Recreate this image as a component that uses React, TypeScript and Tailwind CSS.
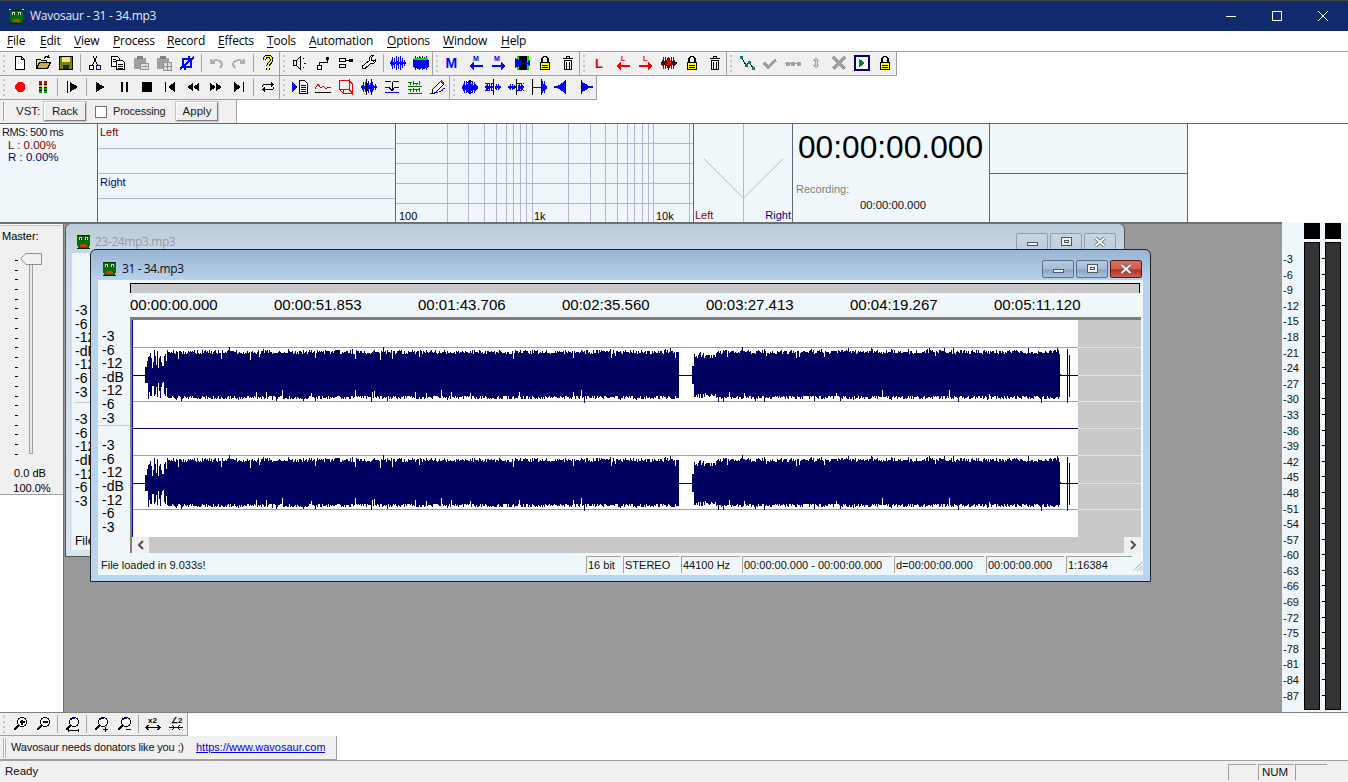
import type { ReactNode } from 'react';

const NAVY = '#000060';
const BLUE = '#0000ff';

function rng(seed: number) {
  let s = seed;
  return () => {
    s = (s * 16807) % 2147483647;
    return s / 2147483647;
  };
}

// one vertical stroke per pixel column, the way the editor paints a zoomed out wave
function wavePath(cy: number, seed: number) {
  const r = rng(seed);
  let d = '';
  for (let x = 145; x < 1060; x++) {
    if (x >= 679 && x < 692) continue;
    let up = 21 + r() * 4;
    let down = 20.5 + r() * 4;
    if (r() < 0.05) up += 1.5 + r() * 2;
    if (r() < 0.05) down += 1.5 + r() * 2;
    if (r() < 0.025) up -= 6;
    if (r() < 0.025) down -= 6;
    if (x < 147) {
      up = 8;
      down = 8;
    } else if (x < 167) {
      const gap = r() < 0.25 ? 10 : 0;
      up = 16 + r() * 9 - gap;
      down = 16 + r() * 9 - gap;
    } else if (x >= 692 && x < 694) {
      up = 9;
      down = 9;
    } else if (x >= 692 && x < 716) {
      up = 17 + r() * 6;
      down = 17 + r() * 6;
    } else if (x >= 676 && x < 679) {
      up = 23;
      down = 23;
    }
    d += `M${x} ${Math.round(cy - up)}V${Math.round(cy + down)}`;
  }
  return d;
}

const bars = (x0: number, hs: number[], color = BLUE) =>
  hs.map((h, i) => <rect key={i} x={x0 + i} y={8 - h / 2} width="1" height={h} fill={color} />);

const WAVE = [2, 6, 12, 3, 10, 2, 14, 4, 12, 2, 14, 4, 10, 2, 6, 2];
const lock = (
  <>
    <path d="M5 7V4.500a3 3 0 0 1 6 0V7" fill="none" stroke="#000" strokeWidth="1.500" />
    <rect x="3.500" y="7.500" width="9" height="7" fill="#ffff00" stroke="#000" />
    <path d="M5 10.500h6M5 12.500h6" stroke="#000" />
  </>
);
const trash = (
  <path d="M3 3.500h10M6.500 3.500v-2h3v2M4.500 5.500v9h7v-9zM6.500 6.500v7M9.500 6.500v7" fill="none" stroke="#000" />
);
const arrowL = (c: string) => <path d="M1 11l5-4v3h9v2H6v3z" fill={c} />;
const arrowR = (c: string) => <path d="M15 11l-5-4v3H1v2h9v3z" fill={c} />;
const small = (t: string, x: number, c: string) => (
  <text x={x} y="6" fontSize="7" fontWeight="700" fontFamily="Liberation Sans" fill={c}>
    {t}
  </text>
);
const glass = (inner?: ReactNode) => (
  <>
    <circle cx="10" cy="6" r="4.500" fill="#fff" stroke="#000" strokeWidth="1.200" />
    <path d="M6.500 9.500 2 14" stroke="#000" strokeWidth="2.500" />
    {inner}
  </>
);
const arc = <path d="M7 4c1-1.500 3-1.500 4-1" fill="none" stroke="#0000c0" />;

const ICONS: Record<string, ReactNode> = {
  new: <path d="M3.500 1.500h6l3 3v10h-9zM9.500 1.500v3h3" fill="#fff" stroke="#000" />,
  open: (
    <>
      <path d="M1.500 13.500v-9h4l1 1h5v2" fill="#f4e9a0" stroke="#000" />
      <path d="M1.500 13.500l3-6h11l-3 6z" fill="#c8b040" stroke="#000" />
      <path d="M9 3.500c1-2 3-2.500 5-1.500l-1-1.500M14 2l-1.500 1" fill="none" stroke="#000" />
    </>
  ),
  save: (
    <>
      <rect x="1.500" y="1.500" width="13" height="13" fill="#808000" stroke="#000" />
      <rect x="4" y="2" width="8" height="5" fill="#e8e890" />
      <rect x="5" y="10" width="6" height="4" fill="#222" />
    </>
  ),
  cut: (
    <>
      <path d="M5.500 10 10 1M10.500 10 6 1" stroke="#000" />
      <circle cx="4.500" cy="12.500" r="2.300" fill="none" stroke="#0000a0" strokeWidth="1.300" />
      <circle cx="11.500" cy="12.500" r="2.300" fill="none" stroke="#0000a0" strokeWidth="1.300" />
    </>
  ),
  copy: (
    <>
      <path d="M1.500 1.500h6l2 2v8h-8z" fill="#fff" stroke="#000" />
      <path d="M6.500 5.500h6l2 2v7h-8z" fill="#fff" stroke="#000" />
      <path d="M8 9.500h5M8 11.500h5M8 13.500h5M3 4.500h3M3 6.500h3" stroke="#000" />
    </>
  ),
  paste: (
    <>
      <rect x="1" y="3" width="12" height="11" rx="1.500" fill="#a0a0a0" />
      <rect x="4" y="1" width="6" height="3" fill="#808080" />
      <rect x="7.500" y="8.500" width="8" height="6" fill="#ddd" stroke="#909090" />
      <path d="M9 11.500h5" stroke="#909090" />
    </>
  ),
  paste2: (
    <>
      <rect x="1" y="3" width="12" height="11" rx="1.500" fill="#a0a0a0" />
      <rect x="4" y="1" width="6" height="3" fill="#808080" />
      <rect x="7.500" y="7.500" width="8" height="8" fill="#ddd" stroke="#909090" />
      <path d="M11.500 8v7M8 11.500h7" stroke="#909090" />
    </>
  ),
  crop: <path d="M4 4h8v8H4zM1 14 15 2M10 1v4M6 11v4" fill="none" stroke={BLUE} strokeWidth="2" />,
  undo: <path d="M3 4v4h4M3.500 8C6 4 13 4 14 10l-2 3" fill="none" stroke="#b0b0b0" strokeWidth="2" />,
  redo: <path d="M13 4v4H9M12.500 8C10 4 3 4 2 10l2 3" fill="none" stroke="#b0b0b0" strokeWidth="2" />,
  help: (
    <>
      <path d="M4.500 5c0-5 7-5 7 0 0 3-3.500 3-3.500 6M8 13v2" fill="none" stroke="#000" strokeWidth="3.500" />
      <path d="M4.500 5c0-5 7-5 7 0 0 3-3.500 3-3.500 6M8 13v2" fill="none" stroke="#ffff00" strokeWidth="1.500" />
    </>
  ),
  speaker: (
    <path d="M1.500 5.500h3l4-4v13l-4-4h-3zM4.500 5.500v5M11 3l1 1M12 8.500h2M11 13l1-1" fill="none" stroke="#000" />
  ),
  node: (
    <>
      <path d="M4.500 11V7.500h8V4" fill="none" stroke="#000" />
      <rect x="2.500" y="10.500" width="4" height="4" fill="#fff" stroke="#000" />
      <rect x="11" y="2" width="3" height="3" fill="#000" />
    </>
  ),
  route: (
    <>
      <rect x="1.500" y="3.500" width="6" height="3" fill="#fff" stroke="#000" />
      <rect x="1.500" y="9.500" width="6" height="3" fill="#fff" stroke="#000" />
      <path d="M8 5.500h4" stroke="#000" />
      <rect x="11" y="4" width="4" height="3" fill="#000" />
    </>
  ),
  wrench: (
    <path
      d="M15 4l-2.500 2L10.500 5l-.5-2 2-2.500C9.500.5 8 2.500 8.500 5.500L1.500 11c-1.500 1.500 1 4 2.500 2.500L10 8c3 1 5.500-1 5-4z"
      fill="#fff"
      stroke="#000"
    />
  ),
  wave: bars(0, WAVE),
  waveTop: (
    <>
      {bars(0, [8, 10, 14, 10, 12, 11, 14, 12, 10, 14, 11, 12, 10, 14, 9, 7])}
      <rect x="1" y="3" width="14" height="2" fill="#00e000" />
    </>
  ),
  M: (
    <text x="0.500" y="13" fontSize="14" fontWeight="700" fontFamily="Liberation Sans" fill={BLUE}>
      M
    </text>
  ),
  leftM: (
    <>
      {small('M', 5, BLUE)}
      {arrowL(BLUE)}
    </>
  ),
  rightM: (
    <>
      {small('M', 3, BLUE)}
      {arrowR(BLUE)}
    </>
  ),
  block: (
    <>
      <rect x="4" y="1" width="10" height="14" fill="#000" />
      <path d="M4 1v14M14 1v14" stroke="#00e000" strokeWidth="1.500" />
      <path d="M1 3v10l4-3V6zM16 5v6l-2-2V7zM5 8h9M6 5v6M12 5v6" fill={BLUE} stroke={BLUE} />
    </>
  ),
  lock,
  trash,
  L: (
    <text x="3" y="13" fontSize="13" fontWeight="700" fontFamily="Liberation Sans" fill="#e00000">
      L
    </text>
  ),
  leftL: (
    <>
      {small('L', 6, '#f00000')}
      {arrowL('#f00000')}
    </>
  ),
  rightL: (
    <>
      {small('L', 5, '#f00000')}
      {arrowR('#f00000')}
    </>
  ),
  kill: (
    <>
      {bars(0, [3, 6, 12, 4, 12, 6, 10, 13, 10, 6, 12, 4, 12, 6, 3, 2], '#800000')}
      <rect x="0" y="7" width="16" height="1" fill="#000" />
      <rect x="6" y="5" width="4" height="5" fill="#f00000" />
    </>
  ),
  points: (
    <>
      <path d="M2 2l5 8 3-3 4 6" fill="none" stroke="#000" />
      <path d="M1 1h3v3H1zM6 9h3v3H6zM9 6h3v3H9zM13 12h3v3h-3z" fill="#008080" />
    </>
  ),
  check: <path d="M2 8l4 4 8-7" fill="none" stroke="#a0a0a0" strokeWidth="3" />,
  dots: <path d="M0 8.500h16M1 7v3h3V7zM6.500 7v3h3V7zM12 7v3h3V7z" fill="#a0a0a0" stroke="#a0a0a0" />,
  updown: <path d="M8 3l2.500 2.500h-1.500v5h1.500L8 13l-2.500-2.500H7v-5H5.500z" fill="#d8d8d8" stroke="#a0a0a0" />,
  cross: <path d="M2 2l12 12M14 2 2 14" stroke="#a0a0a0" strokeWidth="3.500" />,
  boxPlay: (
    <>
      <rect x="1" y="1" width="14" height="14" fill="#fff" stroke="#000080" strokeWidth="2" />
      <path d="M5 3.500v9l6-4.500z" fill="#008040" />
    </>
  ),
  rec: <path d="M6 3h4l3 3v4l-3 3H6l-3-3V6z" fill="#ff0000" />,
  meter: (
    <>
      <path d="M4 2h3v3H4zM9 2h3v3H9z" fill="#e00000" />
      <path d="M4 6h3v2H4zM9 6h3v2H9z" fill="#e0c000" />
      <path d="M4 9h3v5H4zM9 9h3v5H9z" fill="#00a000" />
      <path d="M4 5.500h3M9 5.500h3M4 8.500h3M9 8.500h3M4 11.500h3M9 11.500h3" stroke="#000" />
    </>
  ),
  stepPlay: <path d="M3 2h1v12H3zM6 3v10l8-5z" fill="#000" />,
  play: <path d="M3 3v10l9-5z" fill="#000" />,
  pause: <path d="M5 3h2v10H5zM10 3h2v10h-2z" fill="#000" />,
  stop: <rect x="3" y="3" width="10" height="10" fill="#000" />,
  first: <path d="M3 3h1v10H3zM13 3v10L6 8z" fill="#000" />,
  rew: <path d="M8 4v8L2 8zM14 4v8L8 8z" fill="#000" />,
  ffw: <path d="M8 4v8l6-4zM2 4v8l6-4z" fill="#000" />,
  last: <path d="M12 3h1v10h-1zM3 3v10l7-5z" fill="#000" />,
  loop: (
    <>
      <path d="M13 5.500H5C3 5.500 2 7 2 8M3 10.500h8c2 0 3-1.500 3-2.500" fill="none" stroke="#000" />
      <path d="M11 3l3 2.500L11 8zM5 8l-3 2.500L5 13z" fill="#000" />
    </>
  ),
  waveDoc: (
    <>
      <path d="M0 3v10l5-4V7z" fill={BLUE} />
      <path d="M7.500 1.500h5l3 3v10h-8zM9 6.500h5M9 8.500h5M9 10.500h5M9 12.500h5" fill="#fff" stroke="#000" />
    </>
  ),
  graph: (
    <>
      <path d="M0 13.500h16" stroke="#000" />
      <path d="M0 10l3-5 3 4 2-2 3 3 2-2 3 1" fill="none" stroke="#e00000" />
    </>
  ),
  cube: (
    <path
      d="M1.500 1.500h10v9h-10zM11.500 1.500l3 4v9l-3-4zM1.500 10.500l4 4h9M5.500 14.500v-4"
      fill="none"
      stroke="#f00000"
      strokeWidth="1.300"
    />
  ),
  waveLines: (
    <>
      {bars(0, [2, 5, 10, 3, 10, 2, 8, 12, 4, 9, 2, 10, 5, 2, 6, 2])}
      <path d="M5.500 0v16M10.500 0v16" stroke="#000" />
    </>
  ),
  norm: (
    <>
      <path d="M1 2.500h6M9 2.500h6M1 13.500h14M1 8.500h4M11 8.500h4" stroke={BLUE} />
      <path d="M8 3v8M5 8l3 4 3-4" fill="none" stroke="#000" />
    </>
  ),
  eq: (
    <path
      d="M1 7.500h14M1 14.500h14M3.500 6V3M6.500 6V2M9.500 6V4M12.500 6V2M3.500 13v-3M6.500 13V9M9.500 13v-2M12.500 13V9M1 3.500h4M7 4.500h4M1 10.500h4M7 10.500h6"
      fill="none"
      stroke="#007000"
    />
  ),
  pencil: (
    <>
      <path d="M2 14v-3L11 2l3 3-9 9z" fill="#fff" stroke="#000" />
      <path d="M11 2l3 3" stroke="#f00000" strokeWidth="2" />
      <path d="M0 15c4 0 5-2 8-2s4-2 7-4" fill="none" stroke={BLUE} strokeDasharray="2 1" />
    </>
  ),
  waveArrow: (
    <>
      {bars(0, [3, 7, 12, 5, 12, 7, 12, 13, 12, 7, 12, 5, 11, 7, 5, 3])}
      <path d="M7.500 1v14" stroke="#000" strokeWidth="1.500" />
      <path d="M5 4l3-3 3 3M5 12l3 3 3-3" fill="none" stroke="#000" />
    </>
  ),
  splitA: (
    <>
      {bars(0, [2, 5, 8, 3, 8, 2, 6, 2, 0, 0, 3, 6, 2, 6, 3, 2])}
      <path d="M0 4.500h8M0 11.500h8" stroke={BLUE} strokeDasharray="2 1" />
      <path d="M8.500 0v16" stroke="#000" />
    </>
  ),
  splitB: (
    <>
      {bars(0, [2, 3, 6, 2, 6, 3, 4, 2, 0, 0, 5, 8, 3, 8, 5, 2])}
      <path d="M9 4.500h7M9 11.500h7" stroke={BLUE} strokeDasharray="2 1" />
      <path d="M8.500 0v16" stroke="#000" />
    </>
  ),
  lineWave: (
    <>
      <path d="M1.500 0v16M10.500 0v16" stroke="#000" />
      <path d="M1 8.500h9" stroke={BLUE} />
      {bars(11, [12, 7, 12, 5, 3])}
    </>
  ),
  fadeL: (
    <>
      <path d="M2 8l9-6v12zM0 7h3v2H0z" fill={BLUE} />
      <path d="M11.500 1v14" stroke="#000" />
    </>
  ),
  fadeR: (
    <>
      <path d="M14 8 4 2v12zM13 7h3v2h-3z" fill={BLUE} />
      <path d="M4.500 1v14" stroke="#000" />
    </>
  ),
  zoomIn: glass(<path d="M7.500 6h5M10 3.500v5" stroke="#000" strokeWidth="1.800" />),
  zoomOut: glass(<path d="M7.500 6h5" stroke="#000" strokeWidth="1.800" />),
  zoomFit: (
    <>
      {glass(arc)}
      <path d="M4.500 13v3M14.500 13v3M4 14.500h11" stroke="#000" />
    </>
  ),
  zoomPlus: (
    <>
      {glass(arc)}
      <path d="M10 13.500h5M12.500 11v5" stroke="#000" />
    </>
  ),
  zoomMinus: (
    <>
      {glass(arc)}
      <path d="M10 13.500h5" stroke="#000" />
    </>
  ),
  x2: (
    <>
      <text x="3" y="7" fontSize="8" fontWeight="700" fontFamily="Liberation Sans" fill="#000">
        x2
      </text>
      <path d="M1 11.500h14M3.500 9 1 11.500 3.500 14M12.500 9l2.500 2.500-2.500 2.500" fill="none" stroke="#000" />
    </>
  ),
  div2: (
    <>
      <text x="3" y="7" fontSize="8" fontWeight="700" fontFamily="Liberation Sans" fill="#000">
        ∠2
      </text>
      <path d="M1 11.500h14M4 9l2.500 2.500L4 14M12 9l-2.500 2.500L12 14" fill="none" stroke="#000" />
    </>
  ),
};

function Icon({ name }: { name: string }) {
  return (
    <div className="flex h-[22px] w-[23px] shrink-0 items-center justify-center">
      <svg width="16" height="16" viewBox="0 0 16 16" shapeRendering="crispEdges">
        {ICONS[name]}
      </svg>
    </div>
  );
}

function Gripper() {
  return (
    <div className="flex h-[22px] w-[8px] shrink-0 flex-col justify-center gap-[3px] pl-[3px]">
      {[0, 1, 2, 3].map((i) => (
        <div key={i} className="h-[2px] w-[2px] bg-[#c4c4c4]" />
      ))}
    </div>
  );
}

function Sep() {
  return (
    <div className="mt-[2px] flex h-[18px] w-[6px] shrink-0 justify-center">
      <div className="w-px bg-[#a8a8a8]" />
    </div>
  );
}

function Toolbar({ items }: { items: string }) {
  return (
    <div className="flex h-full items-start border-r border-b border-[#a0a0a0] bg-[#f0f0f0]">
      <Gripper />
      {items.split(' ').map((n, i) => (n === '|' ? <Sep key={i} /> : <Icon key={i} name={n} />))}
    </div>
  );
}

function ToolRow({ bars: groups }: { bars: string[] }) {
  return (
    <div className="flex h-[24px]">
      {groups.map((g, i) => (
        <Toolbar key={i} items={g} />
      ))}
    </div>
  );
}

function Logo() {
  return (
    <svg width="17" height="17" viewBox="0 0 16 16" shapeRendering="crispEdges" className="shrink-0">
      <path d="M1 1h2v1H1zM13 1h2v1h-2z" fill="#e8e800" />
      <path d="M2 2h12v10h-1v2h1v1H2v-1h1v-2H2z" fill="#007000" />
      <path d="M4 4h3v3H4zM9 4h3v3H9z" fill="#d0d0d0" />
      <path d="M5 5h1v2H5zM10 5h1v2h-1z" fill="#000" />
      <path d="M6 10h4v1h1v2H5v-2h1z" fill="#e03020" />
      <path d="M2 2h12v1H2zM2 14h12v1H2z" fill="#003000" />
    </svg>
  );
}

function Menu() {
  const items: [string, string, number][] = [
    ['F', 'ile', 33],
    ['E', 'dit', 34],
    ['V', 'iew', 39],
    ['P', 'rocess', 54],
    ['R', 'ecord', 51],
    ['E', 'ffects', 49],
    ['T', 'ools', 42],
    ['A', 'utomation', 78],
    ['O', 'ptions', 56],
    ['W', 'indow', 58],
    ['H', 'elp', 40],
  ];
  return (
    <div className="flex h-[20px] items-center bg-white pl-[7px] font-['Open_Sans',sans-serif] text-[12px] tracking-[-0.2px] text-black">
      {items.map(([a, b, w]) => (
        <div key={a + b} style={{ width: w }}>
          <span className="underline underline-offset-2">{a}</span>
          {b}
        </div>
      ))}
    </div>
  );
}

function TitleBar() {
  return (
    <div className="flex h-[31px] items-center border-t border-[#444] bg-[#102b6e] pl-[8px] font-['Open_Sans',sans-serif] text-[12px] text-[#e8e8f0]">
      <div className="mr-[5px]">
        <Logo />
      </div>
      <span className="tracking-[-0.25px]">Wavosaur - 31 - 34.mp3</span>
      <div className="ml-auto mr-[2px] flex">
        <div className="flex h-[30px] w-[46px] items-center justify-center">
          <div className="h-px w-[10px] bg-white" />
        </div>
        <div className="flex h-[30px] w-[46px] items-center justify-center">
          <div className="h-[10px] w-[10px] border border-white" />
        </div>
        <div className="flex h-[30px] w-[46px] items-center justify-center">
          <svg width="10" height="10" viewBox="0 0 10 10">
            <path d="M0 0l10 10M10 0 0 10" stroke="#fff" />
          </svg>
        </div>
      </div>
    </div>
  );
}

function VstBar() {
  return (
    <div className="flex h-[23px]">
      <div className="flex w-[237px] items-center border-r border-[#a0a0a0] bg-[#f0f0f0] text-[11px] text-[#202020]">
        <div className="ml-[3px] h-[19px] w-[2px] border-l border-[#a0a0a0] bg-white" />
        <span className="ml-[11px] w-[28px] text-[11.500px]">VST:</span>
        <div className="flex h-[19px] w-[42px] items-center justify-center border border-[#fff] border-r-[#808080] border-b-[#808080] bg-[#efefef] text-[11.500px] outline outline-[#c8c8c8]">
          Rack
        </div>
        <div className="ml-[9px] h-[12px] w-[12px] border border-[#707070] bg-white" />
        <span className="ml-[6px] w-[63px] tracking-[-0.2px]">Processing</span>
        <div className="flex h-[19px] w-[42px] items-center justify-center border border-[#fff] border-r-[#808080] border-b-[#808080] bg-[#efefef] text-[11.500px] outline outline-[#c8c8c8]">
          Apply
        </div>
      </div>
    </div>
  );
}

const PANEL = 'h-full shrink-0 border-r border-[#646478] bg-[#f0f7fb]';

function InfoPanels() {
  const freq = [447, 468, 484, 496, 506, 513, 520, 526, 532, 568, 590, 605, 617, 627, 634, 642, 648, 653, 689];
  return (
    <div className="flex h-[99px] border-t border-[#646478] text-[11px] leading-[12px]">
      <div className={`${PANEL} w-[98px] pt-[2px] pl-[2px] leading-[12.500px]`}>
        <div className="tracking-[-0.5px] text-[#202020]">RMS: 500 ms</div>
        <div className="pl-[6px] text-[11.500px] text-[#800000]">L : 0.00%</div>
        <div className="pl-[6px] text-[11.500px] text-[#000080]">R : 0.00%</div>
      </div>
      <div className={`${PANEL} flex w-[298px] flex-col`}>
        <div className="h-[25px] border-b border-[#b4b4cc] pt-[2px] pl-[2px] text-[#800000]">Left</div>
        <div className="h-[25px] border-b border-[#b4b4cc]" />
        <div className="h-[25px] border-b border-[#b4b4cc] pt-[2px] pl-[2px] text-[#000080]">Right</div>
        <div className="flex-1" />
      </div>
      <div className={`${PANEL} relative w-[298px]`}>
        <svg className="block" width="297" height="98" viewBox="396 124 297 98" shapeRendering="crispEdges">
          {[143, 163, 183, 203].map((y) => (
            <path key={y} d={`M396 ${y + 0.5}H693`} stroke="#b4b4cc" />
          ))}
          {freq.map((x) => (
            <path key={x} d={`M${x + 0.5} 124V222`} stroke="#b4b4cc" />
          ))}
        </svg>
        <span className="absolute bottom-0 left-[3px] text-black">100</span>
        <span className="absolute bottom-0 left-[138px] text-black">1k</span>
        <span className="absolute bottom-0 left-[260px] text-black">10k</span>
      </div>
      <div className={`${PANEL} relative w-[99px]`}>
        <svg className="block" width="98" height="98" viewBox="694 124 98 98">
          <path d="M743.500 124V222M704 159l39.500 39L783 159" fill="none" stroke="#b8b8c8" />
        </svg>
        <span className="absolute bottom-[1px] left-[1px] text-[#800000]">Left</span>
        <span className="absolute right-[1px] bottom-[1px] text-[#000080]">Right</span>
      </div>
      <div className={`${PANEL} w-[197px]`}>
        <div className="mt-[5px] pl-[5px] text-[31.700px] leading-[36px] text-black">00:00:00.000</div>
        <div className="mt-[18px] pl-[3px] text-[#808070]">Recording:</div>
        <div className="mt-[4px] pl-[67px] text-[11.300px] text-[#101010]">00:00:00.000</div>
      </div>
      <div className={`${PANEL} w-[198px]`}>
        <div className="h-[50px] border-b border-[#646478]" />
      </div>
    </div>
  );
}

function MasterPanel() {
  const ticks = Array.from({ length: 21 }, (_, i) => i);
  return (
    <div className="flex w-[64px] shrink-0 flex-col border-t-2 border-r border-[#707070] bg-white">
      <div className="h-[271px] border-b border-[#a0a0a0] bg-[#f0f0f0] text-[11px] text-black">
        <div className="mx-[1px] h-[2px] border-b border-[#c0c0c0] bg-white" />
        <div className="mt-[3px] pl-[2px] leading-[14px]">Master:</div>
        <div className="relative mt-[13px] ml-[15px] h-[205px] pt-[4px]">
          <div className="absolute top-0 left-[14px] h-[198px] w-[4px] border border-[#a0a0a0] bg-[#e8e8e8]" />
          <svg className="absolute top-[-3px] left-[5px]" width="22" height="12" viewBox="0 0 22 12">
            <path d="M.5 5.500 6 .5h15.500v11H6z" fill="#f0f0f0" stroke="#909090" />
          </svg>
          {ticks.map((i) => (
            <div key={i} className="mb-[8.700px] h-px w-[3px] bg-black" />
          ))}
        </div>
        <div className="mt-[5px] text-center leading-[15px]">
          <div className="pr-[3px]">0.0 dB</div>
          <div className="pl-[1px]">100.0%</div>
        </div>
      </div>
    </div>
  );
}

function MeterPanel() {
  const labels = Array.from({ length: 29 }, (_, i) => -3 * (i + 1));
  return (
    <div className="flex w-[66px] shrink-0 bg-[#f0f7fb] pt-px">
      <div className="w-[22px] pt-[29px] pl-px text-[11px]">
        {labels.map((l) => (
          <div key={l} className="h-[15.600px] leading-[15.600px] text-[#101010]">
            {l}
          </div>
        ))}
      </div>
      <div className="flex w-[16px] flex-col gap-[3px]">
        <div className="h-[16px] bg-black" />
        <div className="h-[468px] border border-black bg-[#333]" />
      </div>
      <div className="w-[5px] pt-[30px]">
        {labels.map((l) => (
          <div key={l} className="h-[15.600px] pt-[5px] pl-[2px]">
            <div className="h-px w-[3px] bg-black" />
          </div>
        ))}
      </div>
      <div className="flex w-[16px] flex-col gap-[3px]">
        <div className="h-[16px] bg-black" />
        <div className="h-[468px] border border-black bg-[#333]" />
      </div>
    </div>
  );
}

function CaptionBtn({ kind, active }: { kind: 'min' | 'max' | 'close'; active: boolean }) {
  const bg =
    kind === 'close' && active
      ? 'bg-[linear-gradient(#d9705f_0%,#c9604f_50%,#b03020_55%,#c86050_100%)] border-[#5a1a1a]'
      : active
        ? 'bg-[linear-gradient(#b4c8dc_0%,#a8bed6_50%,#88a4c4_55%,#a8c4e0_100%)] border-[#5c7088]'
        : 'bg-[linear-gradient(#c8d6e2,#bccede)] border-[#8c9cac]';
  return (
    <div className={`flex h-[18px] w-[32px] items-center justify-center rounded-[2px] border ${bg}`}>
      {kind === 'min' && <div className="mt-[4px] h-[4px] w-[11px] border border-[#505860] bg-[#f0f0f0]" />}
      {kind === 'max' && (
        <div className="flex h-[9px] w-[11px] items-center justify-center border border-[#505860] bg-[#f0f0f0]">
          <div className="h-[3px] w-[5px] border border-[#505860]" />
        </div>
      )}
      {kind === 'close' && (
        <svg width="12" height="10" viewBox="0 0 12 10">
          <path d="M1.500 1l9 8M10.500 1l-9 8" stroke="#505860" strokeWidth="3.400" />
          <path d="M1.500 1l9 8M10.500 1l-9 8" stroke="#f4f4f4" strokeWidth="2" />
        </svg>
      )}
    </div>
  );
}

function DbLabels({ top }: { top: string }) {
  const list = ['-3', '-6', '-12', '-dB', '-12', '-6', '-3'];
  return (
    <div className={`${top} text-[14px] text-black`}>
      {list.map((l, i) => (
        <div key={i} className="h-[13.600px] overflow-hidden leading-[14px]">
          {l}
        </div>
      ))}
    </div>
  );
}

function BackWindow() {
  return (
    <div className="absolute -top-px left-px flex h-[334px] w-[1060px] flex-col rounded-t-[6px] border border-[#555] bg-[linear-gradient(#bccbd9,#c8d8e8_30px,#d8e6f2)] px-[6px]">
      <div className="flex h-[29px] shrink-0 items-center pt-[6px] pl-[3px] text-[12px] text-[#9a9a9a]">
        <div className="mr-[3px]">
          <Logo />
        </div>
        <span className="font-['Open_Sans',sans-serif] tracking-[-0.4px]">23-24mp3.mp3</span>
        <div className="ml-auto mr-[2px] flex gap-[2px]">
          <CaptionBtn kind="min" active={false} />
          <CaptionBtn kind="max" active={false} />
          <CaptionBtn kind="close" active={false} />
        </div>
      </div>
      <div className="mb-[7px] flex-1 bg-[#f0f7fb] pl-[3px]">
        <div className="w-[40px] pt-[50px]">
          <DbLabels top="" />
          <div className="mt-[4px] h-px bg-[#c8c8d0]" />
          <DbLabels top="mt-[9px]" />
        </div>
        <div className="mt-[25px] text-[12px]">File</div>
      </div>
    </div>
  );
}

function Waveform() {
  const lines = [347, 401, 455, 509];
  return (
    <svg className="block" width="1009" height="217" viewBox="132 320 1009 217" shapeRendering="crispEdges">
      <rect x="132" y="320" width="1009" height="217" fill="#fff" />
      <rect x="1078" y="320" width="63" height="217" fill="#c8c8c8" />
      {lines.map((y) => (
        <path key={y} d={`M132 ${y + 0.5}H1078`} stroke="#a0a0a0" />
      ))}
      {[347, 375, 401, 428, 455, 483, 509].map((y) => (
        <path key={y} d={`M1078 ${y + 0.5}H1141`} stroke="#e4e4e4" />
      ))}
      <path d="M132.500 320V537" stroke="#0000a0" strokeWidth="1.500" />
      <path d="M132 428.500H1078" stroke={NAVY} />
      {[375, 483].map((y) => (
        <path key={y} d={`M132 ${y + 0.5}H146M679 ${y + 0.5}H692M1059 ${y + 0.5}H1078`} stroke={NAVY} />
      ))}
      <path d={wavePath(375, 12345)} stroke={NAVY} fill="none" />
      <path d={wavePath(483, 12345)} stroke={NAVY} fill="none" />
      {[375, 483].map((y) => (
        <path
          key={y}
          d={`M1067.500 ${y - 26}V${y + 28}M1069.500 ${y - 20}V${y + 22}M1059.500 ${y - 2}V${y + 2}M1060.500 ${y - 1}V${y + 1}`}
          stroke={NAVY}
        />
      ))}
    </svg>
  );
}

function StatusPane({ w, children }: { w: number; children?: ReactNode }) {
  return (
    <div
      className="h-[17px] shrink-0 overflow-hidden whitespace-nowrap border-t border-l border-[#a0a0a0] pl-px leading-[16px] text-[#101010]"
      style={{ width: w }}
    >
      {children}
    </div>
  );
}

function FrontWindow() {
  const marks = ['00:00:00.000', '00:00:51.853', '00:01:43.706', '00:02:35.560', '00:03:27.413', '00:04:19.267', '00:05:11.120'];
  return (
    <div className="absolute top-[25px] left-[26px] flex h-[333px] w-[1061px] flex-col rounded-t-[6px] border border-[#222] bg-[linear-gradient(#9ab5d3,#b8d2ec_30px,#b8d4ee)] px-[7px] pb-[6px]">
      <div className="flex h-[30px] shrink-0 items-center pt-[7px] pl-[3px] font-['Open_Sans',sans-serif] text-[12px] text-[#101010]">
        <div className="mr-[4px]">
          <Logo />
        </div>
        <span className="tracking-[-0.4px]">31 - 34.mp3</span>
        <div className="ml-auto mr-[1px] flex gap-[2px]">
          <CaptionBtn kind="min" active />
          <CaptionBtn kind="max" active />
          <CaptionBtn kind="close" active />
        </div>
      </div>
      <div className="flex-1 bg-[#f0f7fb] pt-[3px]">
        <div className="ml-[32px] h-[10px] w-[1010px] border-x border-t border-black bg-[#c8c8c8]" />
        <div className="flex h-[24px] items-center pl-[32px] text-[15px] text-black">
          {marks.map((m) => (
            <div key={m} className="w-[144px]">
              {m}
            </div>
          ))}
        </div>
        <div className="flex">
          <div className="w-[32px] shrink-0 pl-[4px]">
            <DbLabels top="pt-[12px]" />
            <div className="-ml-[4px] mt-px h-px bg-[#c8c8d0]" />
            <DbLabels top="pt-[12px]" />
          </div>
          <div className="border-t-[3px] border-l-2 border-[#808080]">
            <Waveform />
            <div className="flex h-[16px] w-[1009px] bg-[#c8c8c8]">
              <div className="flex w-[17px] items-center justify-center bg-[#f0f0f0]">
                <svg width="8" height="10" viewBox="0 0 8 10">
                  <path d="M6 1 2 5l4 4" fill="none" stroke="#505050" strokeWidth="2" />
                </svg>
              </div>
              <div className="ml-auto flex w-[17px] items-center justify-center bg-[#f0f0f0]">
                <svg width="8" height="10" viewBox="0 0 8 10">
                  <path d="M2 1l4 4-4 4" fill="none" stroke="#505050" strokeWidth="2" />
                </svg>
              </div>
            </div>
          </div>
        </div>
        <div className="mt-[3px] flex items-start text-[11px]">
          <div className="w-[488px] shrink-0 pl-[3px] leading-[19px] text-[#101010]">File loaded in 9.033s!</div>
          <div className="flex gap-[2px]">
            <StatusPane w={35}>16 bit</StatusPane>
            <StatusPane w={56}>STEREO</StatusPane>
            <StatusPane w={59}>44100 Hz</StatusPane>
            <StatusPane w={150}>00:00:00.000 - 00:00:00.000</StatusPane>
            <StatusPane w={90}>d=00:00:00.000</StatusPane>
            <StatusPane w={78}>00:00:00.000</StatusPane>
            <StatusPane w={66}>1:16384</StatusPane>
          </div>
          <svg className="ml-auto mt-[4px]" width="12" height="12" viewBox="0 0 12 12">
            <path d="M11 2 2 11M11 6l-5 5M11 9l-2 2" stroke="#a0a0a0" />
          </svg>
        </div>
      </div>
    </div>
  );
}

function Bottom() {
  return (
    <>
      <div className="flex h-[24px] border-t border-[#808080] bg-white">
        <Toolbar items="zoomIn zoomOut | zoomFit | zoomPlus zoomMinus | x2 div2" />
      </div>
      <div className="flex h-[24px] bg-white">
        <div className="flex w-[337px] items-center whitespace-nowrap border-r border-b border-[#a0a0a0] bg-[#f0f0f0] text-[11px] text-[#101010]">
          <div className="ml-[3px] h-[20px] w-[3px] border-x border-[#b0b0b0] bg-white" />
          <span className="ml-[5px] w-[185px] tracking-[-0.15px]">Wavosaur needs donators like you ;)</span>
          <span className="w-[129px] overflow-hidden text-[#0000e0] underline">https://www.wavosaur.com</span>
        </div>
      </div>
      <div className="flex h-[22px] items-center border-t border-[#a0a0a0] bg-[#f0f0f0] pl-[5px] text-[11.500px] text-[#101010]">
        <span>Ready</span>
        <div className="ml-auto mr-[21px] flex gap-px">
          <div className="mr-px h-[16px] w-[28px] border-t border-l border-[#a0a0a0]" />
          <div className="h-[16px] w-[36px] border-t border-l border-[#a0a0a0] pl-[3px] leading-[15px]">NUM</div>
          <div className="h-[16px] w-[32px] border-t border-l border-[#a0a0a0]" />
        </div>
      </div>
    </>
  );
}

export default function App() {
  return (
    <div className="flex h-[782px] w-[1348px] flex-col overflow-hidden bg-white font-['Liberation_Sans',sans-serif]">
      <TitleBar />
      <Menu />
      <div className="h-px bg-[#a0a0a0]" />
      <ToolRow
        bars={[
          'new open save | cut copy paste paste2 crop | undo redo | help',
          'speaker node route wrench | wave waveTop',
          'M leftM rightM block lock trash',
          'L leftL rightL kill lock trash',
          'points check dots updown cross boxPlay lock',
        ]}
      />
      <ToolRow
        bars={[
          'rec meter | stepPlay | play pause stop first rew ffw last | loop',
          'waveDoc graph cube waveLines norm eq pencil',
          'waveArrow splitA splitB lineWave fadeL fadeR',
        ]}
      />
      <VstBar />
      <InfoPanels />
      <div className="flex h-[490px]">
        <MasterPanel />
        <div className="relative flex-1 overflow-hidden border-t-2 border-[#707070] bg-[#999]">
          <BackWindow />
          <FrontWindow />
        </div>
        <MeterPanel />
      </div>
      <Bottom />
    </div>
  );
}
